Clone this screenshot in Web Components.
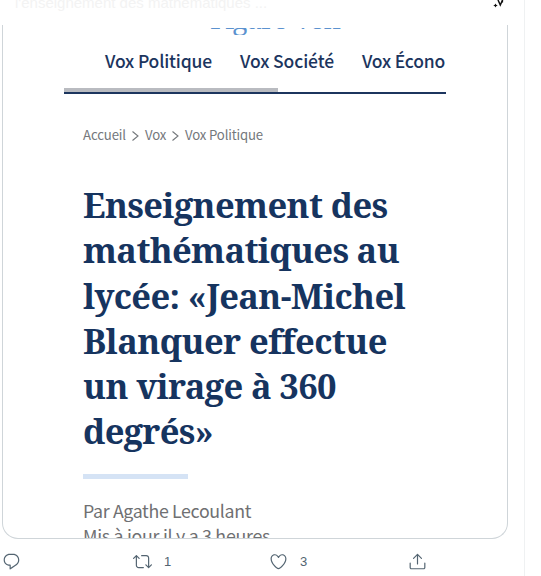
<!DOCTYPE html>
<html lang="fr">
<head>
<meta charset="utf-8">
<title>Vox Politique</title>
<style>
  body {
    margin: 0;
    background: #fff;
    overflow: hidden;
    font-family: "Noto Sans CJK SC", "Noto Sans", sans-serif;
  }
</style>
</head>
<body>
<tweet-column>
  <tweet-heading slot="header">l'enseignement des mathématiques ...</tweet-heading>
  <article-card>
    <vox-nav></vox-nav>
    <bread-crumb></bread-crumb>
    <article-title></article-title>
    <article-byline></article-byline>
  </article-card>
  <tweet-actions slot="footer" retweets="1" likes="3"></tweet-actions>
</tweet-column>

<script>
// One line of text, spaced out to the width given in pixels
class FitText extends HTMLElement {
  constructor() {
    super();
    this.attachShadow({ mode: 'open' });
  }

  connectedCallback() {
    this.shadowRoot.innerHTML = `
      <style>
        :host { display: block; white-space: nowrap; }
        span { display: inline-block; }
      </style>
      <span><slot></slot></span>`;
    const span = this.shadowRoot.querySelector('span');
    const width = Number(this.getAttribute('width'));
    const gap = (width - span.getBoundingClientRect().width) / this.textContent.length;
    span.style.letterSpacing = `${gap}px`;
    this.style.width = `${width}px`;
  }
}

class TweetColumn extends HTMLElement {
  constructor() {
    super();
    this.attachShadow({ mode: 'open' }).innerHTML = `
      <style>
        :host {
          display: flex;
          flex-direction: column;
          box-sizing: border-box;
          width: 525px;
          height: 576px;
          border-right: 1px solid #eff1f2;
        }
      </style>
      <slot name="header"></slot>
      <slot></slot>
      <slot name="footer"></slot>`;
  }
}

class TweetHeading extends HTMLElement {
  constructor() {
    super();
    this.attachShadow({ mode: 'open' }).innerHTML = `
      <style>
        :host {
          display: flex;
          justify-content: space-between;
          height: 25px;
          overflow: hidden;
          font: 15px/17px "Liberation Sans", sans-serif;
          color: #f3f3f3;
        }
        .text { margin: -6px 0 0 15px; }
        svg { width: 14px; height: 10px; margin-right: 17px; }
      </style>
      <span class="text"><slot></slot></span>
      <svg viewBox="0 0 14 10">
        <path d="M2.500 3.400l.7 1.400 1.500.7-1.500.7-.7 1.400-.7-1.400-1.500-.7 1.500-.7z" fill="#111"/>
        <path d="M5 0l2.300 5L9.600 0" fill="none" stroke="#111" stroke-width="1.500"/>
        <path d="M9.500 0v2.500" stroke="#111" stroke-width="1.200"/>
      </svg>`;
  }
}

class ArticleCard extends HTMLElement {
  constructor() {
    super();
    this.attachShadow({ mode: 'open' }).innerHTML = `
      <style>
        :host {
          display: block;
          box-sizing: border-box;
          width: 506px;
          height: 514px;
          margin-left: 2px;
          padding: 3px 61px 0;
          overflow: hidden;
          border: 1px solid #cfd5d9;
          border-top: 0;
          border-radius: 0 0 16px 16px;
        }
      </style>
      <slot></slot>`;
  }
}

class VoxNav extends HTMLElement {
  constructor() {
    super();
    this.attachShadow({ mode: 'open' }).innerHTML = `
      <style>
        :host { display: block; width: 382px; color: #1c355e; overflow: hidden; }
        .logo {
          height: 7px;
          overflow: hidden;
          padding-left: 146px;
          font: 28px/20px "Noto Serif", "DejaVu Serif", serif;
          color: #5b92cf;
        }
        .logo fit-text { margin-top: -20px; }
        nav {
          display: flex;
          gap: 28px;
          height: 53px;
          padding-left: 41px;
          font-size: 17.500px;
          font-weight: 500;
          line-height: 51px;
        }
        .track { height: 4px; border-bottom: 2px solid #1c355e; }
        .thumb { width: 214px; height: 4px; background: #b9bbc0; }
      </style>
      <div class="logo"><fit-text width="129">Figaro Vox</fit-text></div>
      <nav>
        <fit-text width="107">Vox Politique</fit-text>
        <fit-text width="94">Vox Société</fit-text>
        <fit-text width="83">Vox Écono</fit-text>
      </nav>
      <div class="track"><div class="thumb"></div></div>`;
  }
}

class BreadCrumb extends HTMLElement {
  constructor() {
    super();
    const arrow = `
      <svg viewBox="0 0 7 10"><path d="M.5.500 6 5 .5 9.500" fill="none" stroke="#74787c" stroke-width="1.100"/></svg>`;
    this.attachShadow({ mode: 'open' }).innerHTML = `
      <style>
        :host {
          display: flex;
          align-items: center;
          height: 20px;
          margin: 31px 0 0 19px;
          font-size: 13.200px;
          line-height: 20px;
          color: #74787c;
        }
        svg { width: 7px; height: 10px; margin: 1px 6px 0; }
      </style>
      <fit-text width="43">Accueil</fit-text>${arrow}
      <fit-text width="21">Vox</fit-text>${arrow}
      <fit-text width="78">Vox Politique</fit-text>`;
  }
}

class ArticleTitle extends HTMLElement {
  constructor() {
    super();
    this.attachShadow({ mode: 'open' }).innerHTML = `
      <style>
        :host { display: block; margin: 37px 0 0 19px; color: #16345f; }
        h1 {
          margin: 0;
          font: bold 34.500px/45.300px "Noto Serif", "DejaVu Serif Condensed", "DejaVu Serif", serif;
        }
      </style>
      <h1>
        <fit-text width="304.500">Enseignement des</fit-text>
        <fit-text width="316">mathématiques au</fit-text>
        <fit-text width="322">lycée: «Jean-Michel</fit-text>
        <fit-text width="302">Blanquer effectue</fit-text>
        <fit-text width="253">un virage à 360</fit-text>
        <fit-text width="130">degrés»</fit-text>
      </h1>`;
  }
}

class ArticleByline extends HTMLElement {
  constructor() {
    super();
    this.attachShadow({ mode: 'open' }).innerHTML = `
      <style>
        :host {
          display: block;
          margin: 20px 0 0 19px;
          font-size: 17.800px;
          line-height: 25px;
          color: #6f7072;
        }
        hr { width: 105px; height: 5px; margin: 0 0 19px; border: 0; background: #d5e3f5; }
      </style>
      <hr>
      <fit-text width="168">Par Agathe Lecoulant</fit-text>
      <fit-text width="187">Mis à jour il y a 3 heures</fit-text>`;
  }
}

class TweetActions extends HTMLElement {
  constructor() {
    super();
    this.attachShadow({ mode: 'open' });
  }

  connectedCallback() {
    this.shadowRoot.innerHTML = `
      <style>
        :host {
          display: grid;
          grid-template-columns: 131px 136px 139px auto;
          align-items: center;
          height: 19px;
          margin: 13px 0 0 2px;
          font: 13px/19px "Liberation Sans", sans-serif;
          color: #536471;
        }
        div { display: flex; align-items: center; gap: 12px; }
        svg { width: 19px; height: 19px; fill: #536471; }
      </style>
      <div>
        <svg viewBox="0 0 24 24"><path d="M14.046 2.242l-4.148-.01h-.002c-4.374 0-7.800 3.427-7.800 7.802 0 4.098 3.186 7.206 7.465 7.370v3.828c0 .108.044.286.120.403.142.225.384.347.632.347.138 0 .277-.038.402-.118.264-.168 6.473-4.140 8.088-5.506 1.902-1.610 3.040-3.970 3.043-6.312v-.017c-.006-4.367-3.430-7.787-7.800-7.788zm3.787 12.972c-1.134.960-4.862 3.405-6.772 4.643V16.670c0-.414-.335-.750-.750-.750h-.396c-3.660 0-6.318-2.476-6.318-5.886 0-3.534 2.768-6.302 6.300-6.302l4.147.010h.002c3.532 0 6.300 2.766 6.302 6.296-.003 1.910-.942 3.844-2.514 5.176z"/></svg>
      </div>
      <div>
        <svg viewBox="0 0 24 24"><path d="M23.770 15.670c-.292-.293-.767-.293-1.060 0l-2.220 2.220V7.650c0-2.068-1.683-3.750-3.750-3.750h-5.850c-.414 0-.750.336-.750.750s.336.750.750.750h5.850c1.240 0 2.250 1.010 2.250 2.250v10.240l-2.220-2.220c-.293-.293-.768-.293-1.060 0s-.294.768 0 1.060l3.500 3.500c.145.147.337.220.530.220s.383-.072.530-.220l3.500-3.500c.294-.292.294-.767 0-1.060zm-10.660 3.280H7.260c-1.240 0-2.250-1.010-2.250-2.250V6.460l2.220 2.220c.148.147.340.220.532.220s.384-.073.530-.220c.293-.293.293-.768 0-1.060l-3.500-3.500c-.293-.294-.768-.294-1.060 0l-3.500 3.500c-.294.292-.294.767 0 1.060s.767.293 1.060 0l2.220-2.220V16.700c0 2.068 1.683 3.750 3.750 3.750h5.850c.414 0 .750-.336.750-.750s-.337-.750-.750-.750z"/></svg>
        <span>${this.getAttribute('retweets')}</span>
      </div>
      <div>
        <svg viewBox="0 0 24 24"><path d="M12 21.638h-.014C9.403 21.590 1.950 14.856 1.950 8.478c0-3.064 2.525-5.754 5.403-5.754 2.290 0 3.830 1.580 4.646 2.730.814-1.148 2.354-2.730 4.645-2.730 2.880 0 5.404 2.690 5.404 5.755 0 6.376-7.454 13.110-10.037 13.157H12zM7.354 4.225c-2.080 0-3.903 1.988-3.903 4.255 0 5.740 7.034 11.596 8.550 11.658 1.518-.062 8.550-5.917 8.550-11.658 0-2.267-1.823-4.255-3.903-4.255-2.528 0-3.940 2.936-3.952 2.965-.230.562-1.156.562-1.387 0-.014-.030-1.425-2.965-3.954-2.965z"/></svg>
        <span>${this.getAttribute('likes')}</span>
      </div>
      <div>
        <svg viewBox="0 0 24 24"><path d="M17.530 7.470l-5-5c-.293-.293-.768-.293-1.060 0l-5 5c-.294.293-.294.768 0 1.060s.767.294 1.060 0l3.720-3.720V15c0 .414.336.750.750.750s.750-.336.750-.750V4.810l3.720 3.720c.146.147.338.220.530.220s.384-.072.530-.220c.293-.293.293-.767 0-1.060z"/><path d="M19.708 21.944H4.292C3.028 21.944 2 20.916 2 19.652V14c0-.414.336-.750.750-.750s.750.336.750.750v5.652c0 .437.355.792.792.792h15.416c.437 0 .792-.355.792-.792V14c0-.414.336-.750.750-.750s.750.336.750.750v5.652c0 1.264-1.028 2.292-2.292 2.292z"/></svg>
      </div>`;
  }
}

customElements.define('fit-text', FitText);
customElements.define('tweet-column', TweetColumn);
customElements.define('tweet-heading', TweetHeading);
customElements.define('article-card', ArticleCard);
customElements.define('vox-nav', VoxNav);
customElements.define('bread-crumb', BreadCrumb);
customElements.define('article-title', ArticleTitle);
customElements.define('article-byline', ArticleByline);
customElements.define('tweet-actions', TweetActions);
</script>
</body>
</html>
